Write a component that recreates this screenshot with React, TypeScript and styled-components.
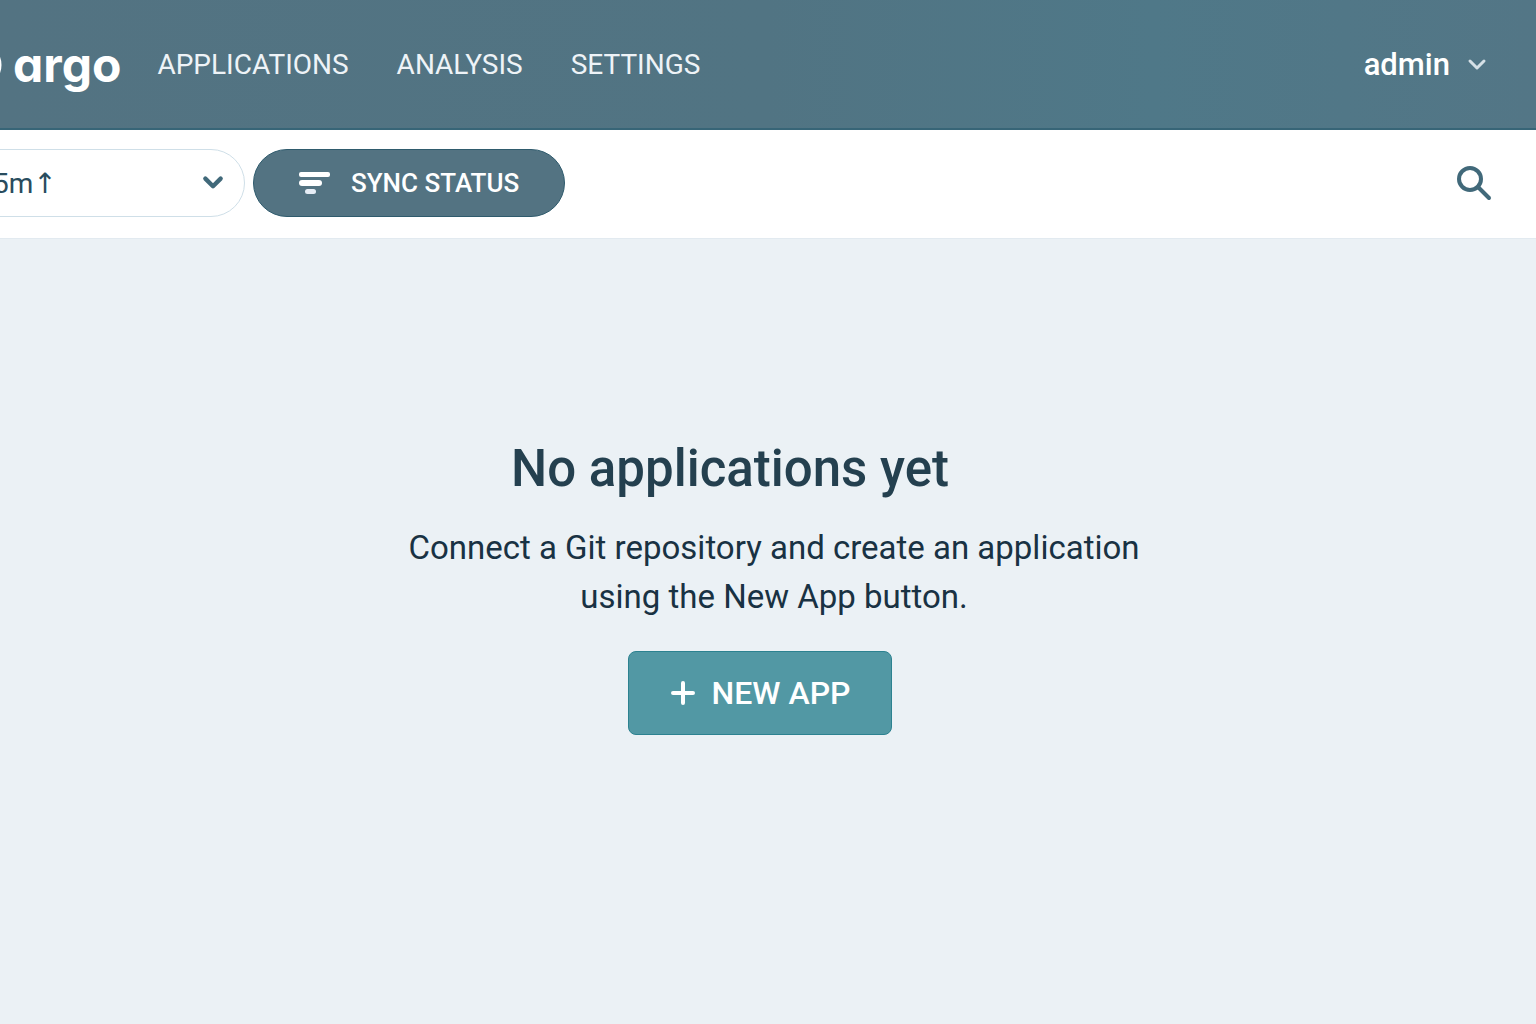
import React from "react";
import styled, { createGlobalStyle } from "styled-components";

const sans = `Roboto, "Liberation Sans", sans-serif`;

const GlobalStyle = createGlobalStyle`
  *, *::before, *::after { box-sizing: border-box; }
  body {
    margin: 0;
    background: #ebf1f5;
    font-family: ${sans};
    overflow-x: hidden;
  }
  button, select { font-family: inherit; cursor: pointer; }
`;

const Page = styled.div`
  min-height: 100vh;
  display: flex;
  flex-direction: column;
  overflow: hidden;
`;

const Header = styled.header`
  display: flex;
  align-items: center;
  height: 130px;
  padding: 2px 48px 0 0;
  background: linear-gradient(90deg, #537382 0%, #517483 50%, #4f7888 75%, #537686 100%);
  border-bottom: 2px solid #376577;
`;

const Brand = styled.a`
  display: flex;
  align-items: center;
  gap: 11px;
  margin-left: -44px;
  color: #ffffff;
  text-decoration: none;
`;

const Wordmark = styled.span`
  font-family: Inter, "Liberation Sans", sans-serif;
  font-size: 48px;
  font-weight: 700;
  line-height: 64px;
  font-feature-settings: "cv11" 1;
`;

const Nav = styled.nav`
  display: flex;
  gap: 48px;
  margin-left: 36px;
`;

const NavLink = styled.a`
  color: #eef3f7;
  font-size: 28px;
  line-height: 32px;
  text-decoration: none;
`;

const UserMenu = styled.button`
  display: flex;
  align-items: center;
  gap: 16px;
  margin-left: auto;
  padding: 0;
  border: 0;
  background: none;
  color: #ffffff;
  font-size: 31px;
  font-weight: 500;
  line-height: 36px;
`;

const Toolbar = styled.section`
  display: flex;
  align-items: center;
  gap: 8px;
  height: 109px;
  padding: 0 44px 2px 0;
  background: #ffffff;
  border-bottom: 1px solid #e2eaf0;
`;

const SelectField = styled.label`
  display: grid;
  align-items: center;
  width: 293px;
  margin-left: -48px;
  > * { grid-area: 1 / 1; }
  > svg {
    justify-self: end;
    margin-right: 20px;
    pointer-events: none;
  }
`;

const IntervalSelect = styled.select`
  appearance: none;
  width: 100%;
  height: 68px;
  padding: 0 48px 0 40px;
  border: 1px solid #cfdfe8;
  border-radius: 34px;
  background: #ffffff;
  color: #294c5e;
  font-family: Roboto, "Noto Sans", "DejaVu Sans", sans-serif;
  font-size: 28px;
`;

const SyncButton = styled.button`
  display: flex;
  align-items: center;
  gap: 20px;
  height: 68px;
  padding: 0 45px;
  border: 1px solid #2f5b6d;
  border-radius: 34px;
  background: #537382;
  color: #ffffff;
  font-size: 26px;
  font-weight: 500;
`;

const SearchButton = styled.button`
  display: flex;
  margin-left: auto;
  padding: 0;
  border: 0;
  background: none;
  color: #41697a;
`;

const Empty = styled.main`
  flex: 1;
  display: flex;
  flex-direction: column;
  align-items: center;
  padding: 200px 16px 0 0;
`;

const Title = styled.h1`
  margin: 0;
  padding-right: 60px;
  color: #24404f;
  font-size: 51px;
  font-weight: 500;
  line-height: 60px;
`;

const Message = styled.p`
  max-width: 780px;
  margin: 24px 0 30px;
  padding-left: 28px;
  color: #193243;
  font-size: 33px;
  line-height: 49px;
  text-align: center;
`;

const NewAppButton = styled.button`
  display: flex;
  align-items: center;
  gap: 16px;
  height: 84px;
  padding: 0 41px;
  border: 1px solid #2c8290;
  border-radius: 8px;
  background: #5298a4;
  color: #ffffff;
  font-size: 32px;
  font-weight: 500;
`;

function Chevron({ size, color, weight }: { size: number; color: string; weight: number }) {
  return (
    <svg width={size} height={size} viewBox="0 0 22 22" fill="none" stroke={color} strokeWidth={weight} strokeLinecap="round" strokeLinejoin="round" aria-hidden="true">
      <path d="M4 7l7 7 7-7" />
    </svg>
  );
}

export default function App() {
  return (
    <Page>
      <GlobalStyle />
      <Header>
        <Brand href="#" aria-label="argo">
          <svg width="46" height="44" viewBox="0 0 46 44" fill="none" aria-hidden="true">
            <circle cx="23" cy="22" r="20" stroke="#ffffff" strokeWidth="5" />
          </svg>
          <Wordmark>argo</Wordmark>
        </Brand>
        <Nav aria-label="Main">
          <NavLink href="#applications">APPLICATIONS</NavLink>
          <NavLink href="#analysis">ANALYSIS</NavLink>
          <NavLink href="#settings">SETTINGS</NavLink>
        </Nav>
        <UserMenu type="button">
          admin
          <Chevron size={22} color="#d5e0e6" weight={3} />
        </UserMenu>
      </Header>
      <Toolbar>
        <SelectField>
          <IntervalSelect aria-label="Interval" defaultValue="5m">
            <option value="5m">5m↑</option>
          </IntervalSelect>
          <Chevron size={24} color="#41697a" weight={4} />
        </SelectField>
        <SyncButton type="button">
          <svg width="32" height="24" viewBox="0 0 32 24" fill="#ffffff" aria-hidden="true">
            <rect x="0" y="1" width="31" height="5" rx="2" />
            <rect x="0" y="9" width="23" height="6" rx="3" />
            <rect x="6" y="18" width="11" height="5" rx="2.5" fill="#e6edf6" />
          </svg>
          SYNC STATUS
        </SyncButton>
        <SearchButton type="button" aria-label="Search">
          <svg width="36" height="36" viewBox="0 0 36 36" fill="none" stroke="currentColor" strokeWidth="4" strokeLinecap="round" aria-hidden="true">
            <circle cx="14" cy="14" r="11" />
            <path d="M22 22l11 11" />
          </svg>
        </SearchButton>
      </Toolbar>
      <Empty>
        <Title>No applications yet</Title>
        <Message>
          Connect a Git repository and create an application using the New App button.
        </Message>
        <NewAppButton type="button">
          <svg width="26" height="26" viewBox="0 0 26 26" fill="none" stroke="#ffffff" strokeWidth="4" strokeLinecap="round" aria-hidden="true">
            <path d="M13 3v20M3 13h20" />
          </svg>
          NEW APP
        </NewAppButton>
      </Empty>
    </Page>
  );
}
